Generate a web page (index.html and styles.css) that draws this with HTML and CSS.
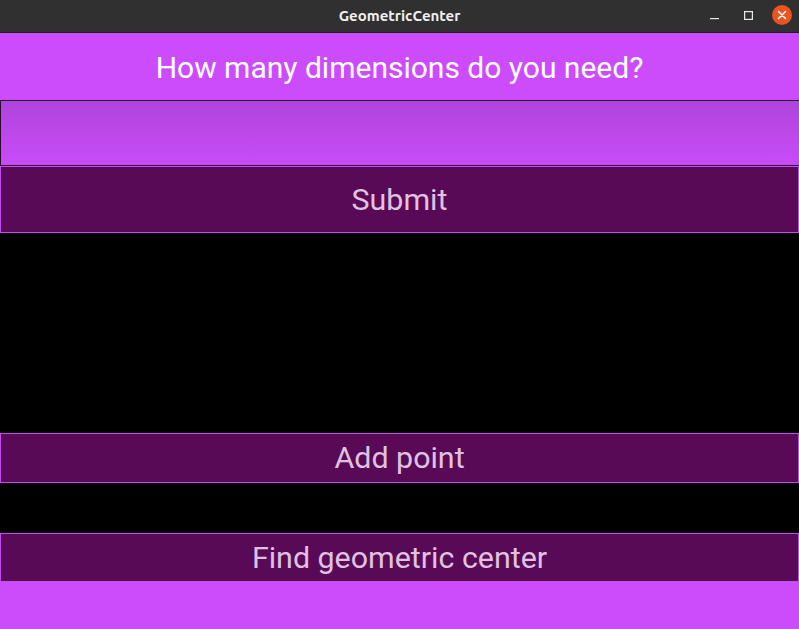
FILE: index.html
```html
<!DOCTYPE html>
<html>
<head>
<meta charset="utf-8">
<link rel="stylesheet" href="styles.css">
</head>
<body>
<div class="window">
  <div class="titlebar">
    <span class="title">GeometricCenter</span>
    <div class="controls">
      <span class="ctl min"><svg width="9" height="10" viewBox="0 0 9 10"><rect x="0" y="7" width="9" height="1.2" fill="#e8e8e8"/></svg></span>
      <span class="ctl max"><svg width="9" height="9" viewBox="0 0 9 9"><rect x="0.6" y="0.6" width="7.8" height="7.8" fill="none" stroke="#e8e8e8" stroke-width="1.2"/></svg></span>
      <span class="ctl close"><svg width="20" height="20" viewBox="0 0 20 20"><circle cx="10" cy="10" r="10" fill="#e95420"/><path d="M6.5 6.5 L13.5 13.5 M13.5 6.5 L6.5 13.5" stroke="#fff" stroke-width="1.5" stroke-linecap="round"/></svg></span>
    </div>
  </div>
  <div class="app">
    <div class="header">How many dimensions do you need?</div>
    <div class="input"></div>
    <div class="btn submit">Submit</div>
    <div class="blank big"></div>
    <div class="btn addp">Add point</div>
    <div class="blank mid"></div>
    <div class="btn findc">Find geometric center</div>
    <div class="footer"></div>
  </div>
</div>
</body>
</html>
```
FILE: styles.css
```css
html, body { margin: 0; padding: 0; }
body { width: 799px; height: 629px; overflow: hidden; background: #cc4cfc; font-family: Roboto, "Noto Sans", sans-serif; }
.window { display: flex; flex-direction: column; height: 629px; }
.titlebar {
  height: 32px; background: #303030; border-bottom: 1px solid #1e1e1e;
  display: flex; align-items: center; justify-content: center; position: relative;
}
.title { color: #f0f0f0; font-family: Ubuntu, "Open Sans", "DejaVu Sans", sans-serif; font-weight: bold; font-size: 15px; margin-top: -1px; }
.controls { position: absolute; right: 7px; top: 0; height: 32px; display: flex; align-items: center; }
.ctl { display: flex; align-items: center; justify-content: center; }
.min { margin-right: 25px; }
.max { margin-right: 19px; margin-top: -1px; }
.close { margin-top: -2px; }
.app { flex: 1; display: flex; flex-direction: column; background: #cc4cfc; }
.header {
  height: 67px; display: flex; align-items: center; justify-content: center;
  color: #ffffff; font-size: 30px; padding-top: 1px; box-sizing: border-box;
}
.input {
  height: 64px; border-top: 1px solid #2a0a30; border-left: 1px solid #2a0a30; border-bottom: 1px solid #3a0c40;
  background: linear-gradient(to bottom, #b044dc, #c84cf8);
  box-shadow: inset 0 -1px 0 #c04ae8;
}
.btn {
  background: #580a56; border: 1px solid #c24cee; color: #e0c2e0;
  display: flex; align-items: center; justify-content: center; font-size: 30.4px;
}
.submit { height: 65px; }
.addp { height: 48px; padding-bottom: 1px; box-sizing: content-box; height: 47px; }
.findc { height: 47px; }
.blank { background: #000; }
.big { height: 200px; }
.mid { height: 50px; }
.footer { flex: 1; }
```
